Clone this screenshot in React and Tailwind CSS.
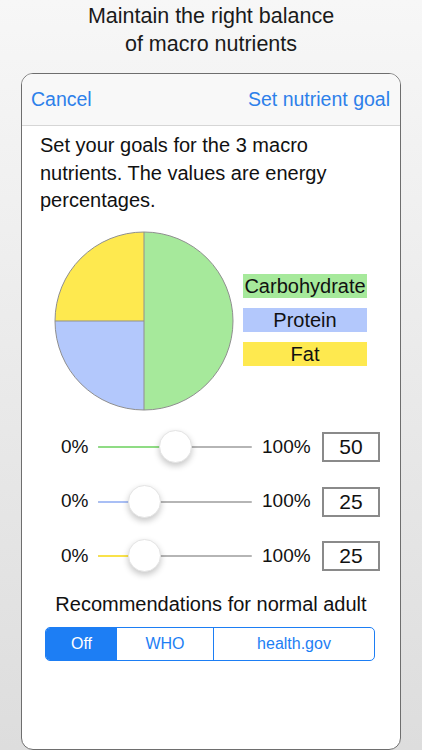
const font = { fontFamily: '"Liberation Sans", Arial, sans-serif' };

const nutrients = [
  { name: "Carbohydrate", color: "bg-[#a6e99b]", track: "bg-[#8fdc84]", value: 50 },
  { name: "Protein", color: "bg-[#b3c8fc]", track: "bg-[#a9bff5]", value: 25 },
  { name: "Fat", color: "bg-[#fee94f]", track: "bg-[#f9e24a]", value: 25 },
];

const Pie = () => (
  <svg width="180" height="180" viewBox="0 0 180 180">
    <path d="M90 90 L90 1 A89 89 0 0 1 90 179 Z" fill="#a6e99b" />
    <path d="M90 90 L90 179 A89 89 0 0 1 1 90 Z" fill="#b3c8fc" />
    <path d="M90 90 L1 90 A89 89 0 0 1 90 1 Z" fill="#fee94f" />
    <line x1="90" y1="1" x2="90" y2="179" stroke="#8f8f8f" strokeWidth="1" />
    <line x1="1" y1="90" x2="90" y2="90" stroke="#8f8f8f" strokeWidth="1" />
    <circle cx="90" cy="90" r="89" fill="none" stroke="#8f8f8f" strokeWidth="1" />
  </svg>
);

const Slider = ({ value, track }) => {
  // thumb travels inside the track, leaving half a thumb at each end
  const left = 16 + (value / 100) * (154 - 32);
  return (
    <div className="relative w-[154px] h-[34px] flex items-center">
      <div className="w-full h-[2px] bg-[#b5b5b5] rounded-full" />
      <div
        className={`absolute left-0 h-[2px] ${track} rounded-full`}
        style={{ width: left }}
      />
      <div
        className="absolute top-0 w-[33px] h-[33px] rounded-full bg-white border border-[#e4e4e4] shadow-[0_3px_6px_rgba(0,0,0,0.22)]"
        style={{ left: left - 16.5 }}
      />
    </div>
  );
};

export default function App() {
  return (
    <div
      className="w-[422px] h-[750px] flex flex-col bg-gradient-to-b from-[#f7f7f7] to-[#dddddd] text-[#111]"
      style={font}
    >
      <h1 className="pt-[2px] text-center text-[21.5px] leading-[28px] text-[#1a1a1a]">
        Maintain the right balance
        <br />
        of macro nutrients
      </h1>

      <div className="mt-[15px] mx-[21px] flex-1 flex flex-col bg-white border border-[#6e6e6e] rounded-[12px] overflow-hidden">
        <div className="h-[52px] shrink-0 flex items-center justify-between pl-[9px] pr-[10px] bg-[#f8f8f8] border-b border-[#d6d6d6] text-[19.5px] text-[#2d80ea]">
          <span>Cancel</span>
          <span>Set nutrient goal</span>
        </div>

        <div className="flex flex-col pl-[18px] pr-[12px]">
          <p className="pt-[6px] text-[20px] leading-[27.5px]">
            Set your goals for the 3 macro
            <br />
            nutrients. The values are energy
            <br />
            percentages.
          </p>

          <div className="mt-[16px] flex items-center">
            <div className="ml-[14px]">
              <Pie />
            </div>
            <div className="ml-[9px] flex flex-col gap-[10px] -mt-[1px]">
              {nutrients.map((n) => (
                <div
                  key={n.name}
                  className={`w-[124px] h-[24px] flex items-center justify-center text-[20px] ${n.color}`}
                >
                  {n.name}
                </div>
              ))}
            </div>
          </div>

          <div className="mt-[20px] flex flex-col gap-[21.5px]">
            {nutrients.map((n) => (
              <div key={n.name} className="flex items-center h-[33px] text-[19px]">
                <span className="ml-[21px] w-[37px]">0%</span>
                <Slider value={n.value} track={n.track} />
                <span className="ml-[10px] w-[60px]">100%</span>
                <div className="w-[58px] h-[30px] border-2 border-[#8a8a8a] flex items-center justify-center text-[21px]">
                  {n.value}
                </div>
              </div>
            ))}
          </div>

          <div className="mt-[19px] text-center text-[20px] leading-[24px] pr-[6px]">
            Recommendations for normal adult
          </div>

          <div className="mt-[11px] ml-[5px] w-[330px] h-[34px] flex border border-[#1d7ef4] rounded-[5px] overflow-hidden text-[16px] text-[#1d7ef4]">
            <div className="w-[71px] flex items-center justify-center bg-[#1d7ef4] text-white">
              Off
            </div>
            <div className="w-[97px] flex items-center justify-center border-r border-[#1d7ef4]">
              WHO
            </div>
            <div className="flex-1 flex items-center justify-center">
              health.gov
            </div>
          </div>
        </div>
      </div>
    </div>
  );
}
